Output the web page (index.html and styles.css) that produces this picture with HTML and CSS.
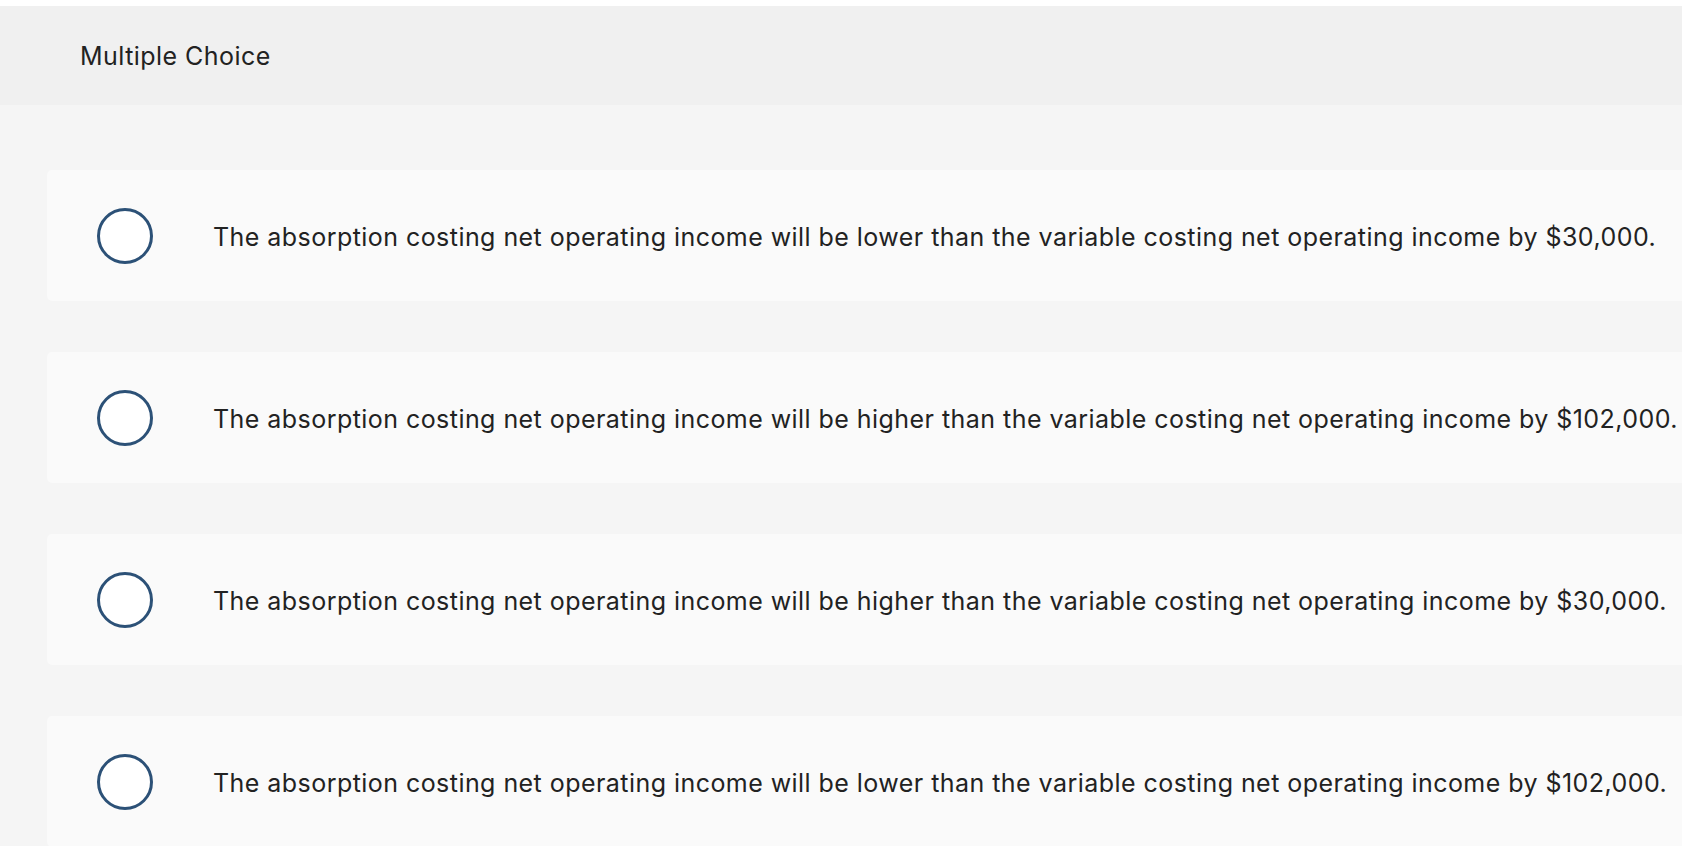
FILE: index.html
```html
<!DOCTYPE html>
<html lang="en">
<head>
<meta charset="utf-8">
<title>Multiple Choice</title>
<link rel="stylesheet" href="styles.css">
</head>
<body>
<div class="page">
  <header class="header">
    <h2 class="title">Multiple Choice</h2>
  </header>
  <main class="choices">
    <label class="choice">
      <span class="radio"></span>
      <span class="text">The absorption costing net operating income will be lower than the variable costing net operating income by $30,000.</span>
    </label>
    <label class="choice">
      <span class="radio"></span>
      <span class="text">The absorption costing net operating income will be higher than the variable costing net operating income by $102,000.</span>
    </label>
    <label class="choice">
      <span class="radio"></span>
      <span class="text">The absorption costing net operating income will be higher than the variable costing net operating income by $30,000.</span>
    </label>
    <label class="choice">
      <span class="radio"></span>
      <span class="text">The absorption costing net operating income will be lower than the variable costing net operating income by $102,000.</span>
    </label>
  </main>
</div>
</body>
</html>
```
FILE: styles.css
```css
html, body {
  margin: 0;
  padding: 0;
  background: #ffffff;
  overflow: hidden;
  height: 100%;
}
.page {
  padding-top: 6px;
  font-family: Inter, "Open Sans", "Liberation Sans", sans-serif;
  font-variant-ligatures: none;
  letter-spacing: 0.45px;
  color: #222222;
  height: 100%;
  box-sizing: border-box;
  display: flex;
  flex-direction: column;
}
.header {
  flex: none;
  background: #f0f0f0;
  height: 99px;
  display: flex;
  align-items: center;
  padding-left: 80px;
}
.title {
  margin: 0;
  font-weight: 400;
  font-size: 25px;
  color: #222222;
}
.choices {
  flex: 1;
  background: #f5f5f5;
  padding: 65px 0 0 47px;
  display: flex;
  flex-direction: column;
  gap: 51px;
}
.choice {
  flex: none;
  background: #fafafa;
  border-radius: 5px;
  height: 131px;
  margin-right: -40px;
  display: flex;
  align-items: center;
  padding-left: 50px;
  gap: 60px;
}
.radio {
  flex: none;
  width: 50px;
  height: 50px;
  border: 3px solid #2c5177;
  border-radius: 50%;
  background: #ffffff;
}
.text {
  font-size: 25px;
  white-space: nowrap;
  color: #222222;
  padding-top: 2px;
}
```
